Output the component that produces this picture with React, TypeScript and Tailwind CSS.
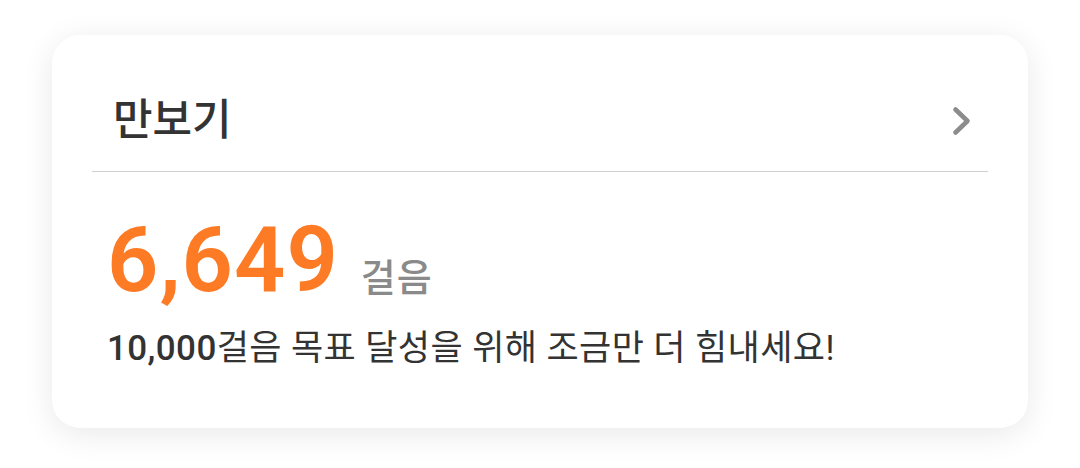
// Pedometer summary card
const STEPS = 6649;
const GOAL = 10000;

function Chevron() {
  return (
    <svg width="20" height="30" viewBox="0 0 20 30" fill="none" className="text-[#8c8c8c]">
      <path
        d="M3.5 3.5 L15.5 15 L3.5 26.5"
        stroke="currentColor"
        strokeWidth="4.6"
        strokeLinecap="round"
        strokeLinejoin="round"
      />
    </svg>
  );
}

export default function App() {
  return (
    <div
      className="h-[468px] w-[1080px] bg-white px-[52px] pt-[35px]"
      style={{ fontFamily: 'Roboto, "Noto Sans CJK KR", sans-serif' }}
    >
      <div className="h-[393px] rounded-[28px] bg-white px-[40px] shadow-[0_6px_32px_rgba(0,0,0,0.09)]">
        <div className="flex h-[137px] items-center justify-between border-b border-[#d0d0d0] pt-[35px] pl-[21px] pr-[16px]">
          <h2 className="text-[43px] font-medium leading-none text-[#333]">만보기</h2>
          <Chevron />
        </div>

        <div className="px-[15px] pt-[44px]">
          <div className="flex items-baseline gap-[22px]">
            <span className="text-[90px] font-semibold leading-none tracking-[1px] text-[#fd7b25]">
              {STEPS.toLocaleString("en-US")}
            </span>
            <span className="text-[38px] font-medium leading-none tracking-[1px] text-[#8a8a8a]">걸음</span>
          </div>
          <p className="mt-[25px] text-[35px] leading-none tracking-[0.4px] text-[#333]">
            <span className="font-medium">{GOAL.toLocaleString("en-US")}</span>걸음 목표 달성을 위해 조금만 더 힘내세요!
          </p>
        </div>
      </div>
    </div>
  );
}
